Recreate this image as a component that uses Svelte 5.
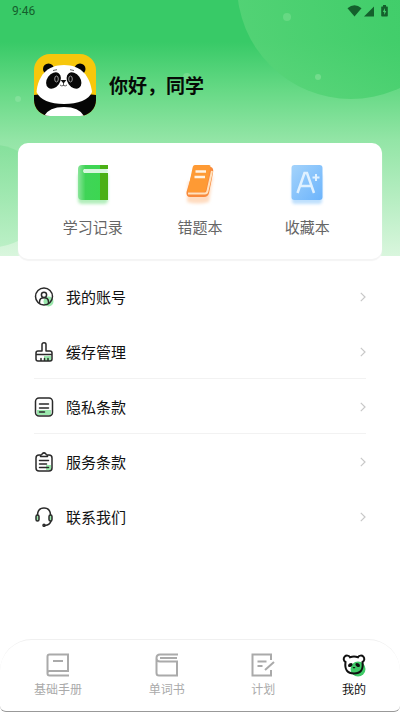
<script>
const stats = [
  {id: 'record', label: '学习记录'},
  {id: 'mistakes', label: '错题本'},
  {id: 'favorites', label: '收藏本'},
];

const rows = [
  {id: 'account', label: '我的账号', line: false},
  {id: 'cache', label: '缓存管理', line: true},
  {id: 'privacy', label: '隐私条款', line: true},
  {id: 'terms', label: '服务条款', line: false},
  {id: 'contact', label: '联系我们', line: false},
];

const tabs = [
  {id: 'manual', label: '基础手册'},
  {id: 'words', label: '单词书'},
  {id: 'plan', label: '计划'},
  {id: 'me', label: '我的'},
];

let activeTab = $state('me');
</script>

<div class="page">
  <header class="hero">
    <svg class="hero__decor" viewBox="0 0 400 256" preserveAspectRatio="xMidYMin slice" aria-hidden="true">
      <defs>
        <linearGradient id="bubble" x1="0" y1="0.5" x2="1" y2="0.3">
          <stop offset="0" stop-color="#58d478"/>
          <stop offset="0.6" stop-color="#45cf6c"/>
          <stop offset="1" stop-color="#3ecc69"/>
        </linearGradient>
        <linearGradient id="bubble-left" x1="0" y1="0" x2="0" y2="1">
          <stop offset="0" stop-color="#82df99"/>
          <stop offset="1" stop-color="#b5eec1"/>
        </linearGradient>
      </defs>
      <circle cx="351" cy="-15" r="114" fill="url(#bubble)" opacity="0.8"/>
      <circle cx="-6" cy="196" r="51" fill="url(#bubble-left)" opacity="0.8"/>
      <circle cx="287" cy="17" r="4" fill="#66d983"/>
      <circle cx="318" cy="77" r="3" fill="#72dc8c"/>
      <circle cx="18" cy="99" r="3" fill="#82e19a"/>
      <circle cx="187" cy="77" r="4" fill="#72dc8c"/>
    </svg>

    <div class="status">
      <span>9:46</span>
      <svg width="42" height="14" viewBox="0 0 42 14" fill="#14602c" aria-hidden="true">
        <path d="M1.5 4.2 Q8.5 -1.6 15.5 4.2 L8.5 12.5Z"/>
        <path d="M18 12.5 L28 2.5 V12.5Z"/>
        <path d="M37 1h3v1.500h1.200q.6 0 .6.6v8.600q0 .8-.8.8h-5q-.8 0-.8-.8v-8.600q0-.6.6-.6H37Z"/>
        <path d="M39 4 L36.800 8h1.400v3L40.300 7H39Z" fill="#43cd6b"/>
      </svg>
    </div>

    <div class="profile">
      <svg class="profile__avatar" width="62" height="62" viewBox="0 0 62 62" role="img" aria-label="头像">
        <rect width="62" height="62" fill="#f7c70c"/>
        <path d="M0 41 Q31 36 62 41 V62 H0Z" fill="#050505"/>
        <circle cx="14.500" cy="15" r="5.500" fill="#050505"/>
        <circle cx="46" cy="15" r="5.500" fill="#050505"/>
        <path d="M2.500 38 C4 22 13 11 30 11 C47 11 56 22 58 38 C55 46 44 50 30 50 C16 50 6 46 2.500 38Z" fill="#fff"/>
        <ellipse cx="19.500" cy="26.500" rx="6.500" ry="9" transform="rotate(35 19.500 26.500)" fill="#080808"/>
        <ellipse cx="40" cy="26.500" rx="6.500" ry="9" transform="rotate(-35 40 26.500)" fill="#080808"/>
        <ellipse cx="22.500" cy="25" rx="1.800" ry="3" fill="none" stroke="#999"/>
        <ellipse cx="36.500" cy="25" rx="1.800" ry="3" fill="none" stroke="#999"/>
        <path d="M26.500 26h6l-3 3.500Z" fill="#111"/>
        <path d="M29.500 29v2.500m-3.500-.5q1.500 1.500 3.500.5q2 1 3.500-.5M19 16.500l4-.8M36 15.700l4 .8" stroke="#333" stroke-width=".8" fill="none"/>
        <path d="M10 62 Q15 53 30 53 Q45 53 50 62Z" fill="#fff"/>
      </svg>
      <h1 class="profile__name">你好，同学</h1>
    </div>
  </header>

  <section class="card">
    {#each stats as stat (stat.id)}
      <button class="stat" type="button">
        <svg width="40" height="48" viewBox="0 0 40 48" aria-hidden="true">
          {#if stat.id === 'record'}
            <defs>
              <linearGradient id="book" x1="0" y1="0" x2="1" y2="0">
                <stop offset="0" stop-color="#8be59b"/>
                <stop offset=".25" stop-color="#40d457"/>
                <stop offset="1" stop-color="#3ad84f"/>
              </linearGradient>
              <filter id="soft" x="-30%" y="-30%" width="160%" height="160%"><feGaussianBlur stdDeviation="1.500"/></filter>
            </defs>
            <rect x="5" y="13" width="30" height="31" rx="4" fill="#b4eebc" filter="url(#soft)"/>
            <path d="M9 5H35V9H11v4H35V40H9q-4 0-4-4V9q0-4 4-4Z" fill="url(#book)"/>
            <path d="M27 5h8v4h-8Zm0 8h8v27h-8Z" fill="#4bb015"/>
            <rect x="10" y="9" width="25" height="4" rx="2" fill="#d7f7dd"/>
          {:else if stat.id === 'mistakes'}
            <path d="M8 22 L33 16 L29 42 Q17 45 7 42Z" fill="#ffdcc0" filter="url(#soft)"/>
            <path d="M14 7H31Q34 8 33 13L29 33Q28 37 24 37H10Q6 37 6.500 32Z" fill="#f98a3c"/>
            <path d="M8 33.500H25Q27 33.500 27.500 31L32 11" stroke="#ffe2bd" stroke-width="2" fill="none"/>
            <path d="M15 5H29Q31 5 30.500 7L26 30Q25.500 32 23.500 32H7.500L12.500 8Q13 5 15 5Z" fill="#fe9a34"/>
            <path d="M15.500 11.500H26M14.500 17H25" stroke="#fff2e2" stroke-width="2.500"/>
          {:else}
            <defs>
              <linearGradient id="sheet" x1="0" y1="0" x2="1" y2="1">
                <stop offset="0" stop-color="#a4d3fb"/>
                <stop offset="1" stop-color="#6cb4fc"/>
              </linearGradient>
            </defs>
            <rect x="5" y="14" width="30" height="30" rx="3" fill="#bfe0fd" filter="url(#soft)"/>
            <rect x="4.500" y="5" width="31" height="35" rx="3" fill="url(#sheet)"/>
            <path d="M10.500 33 L17.500 13 H20 L27 33M13 26H25" stroke="#e0f1ff" stroke-width="2.500" fill="none"/>
            <path d="M29 14v7M25.500 17.500h7" stroke="#e0f1ff" stroke-width="2"/>
          {/if}
        </svg>
        <span>{stat.label}</span>
      </button>
    {/each}
  </section>

  <ul class="menu">
    {#each rows as row (row.id)}
      <li class="menu__row {row.line ? 'menu__row--line' : ''}">
        <button class="menu__button" type="button">
          <svg width="20" height="20" viewBox="0 0 20 20" fill="none" stroke="#2a2a2a" stroke-width="1.500" stroke-linecap="round" stroke-linejoin="round" aria-hidden="true">
            {#if row.id === 'account'}
              <circle cx="14.500" cy="14.500" r="5" fill="#9be8ad" stroke="none"/>
              <circle cx="10" cy="9.500" r="8.500"/>
              <circle cx="10" cy="7.800" r="2.600"/>
              <path d="M5.500 16.500V15Q5.500 10.800 10 10.800T14.500 15v1.500"/>
            {:else if row.id === 'cache'}
              <path d="M10 14h7v5h-7Z" fill="#9be8ad" stroke="none"/>
              <path d="M8 9V2.500Q8 .8 10 .8T12 2.500V9h4q2 0 2 2v6q0 2-2 2H4q-2 0-2-2v-6Q2 9 4 9ZM2 12.500h16M7 19v-2.500M10.500 19v-2.500M14 19v-2.500"/>
            {:else if row.id === 'privacy'}
              <path d="M3 13h14v5H3Z" fill="#9be8ad" stroke="none"/>
              <rect x="1.500" y="1" width="17" height="18" rx="3.500"/>
              <path d="M5.500 7h9M5.500 11h9M5.500 15h5"/>
            {:else if row.id === 'terms'}
              <path d="M12 13h5v5h-5Z" fill="#9be8ad" stroke="none"/>
              <path d="M6.500 3H5Q2 3 2 6v10q0 3 3 3h10q3 0 3-3V6q0-3-3-3h-1.500M6.500 4.500V3Q8 3 8.200 1.800 10 0 11.800 1.800 12 3 13.500 3v1.500ZM5.500 8.500h9M5.500 12h7M5.500 15.500h9"/>
            {:else}
              <path d="M3.500 8V7.500Q4 1 10 1t6.500 6.500V8M17 14q-1 4-6 4.500"/>
              <rect x="2" y="8" width="3" height="6" rx="1.500" fill="#9be8ad"/>
              <rect x="15" y="8" width="3" height="6" rx="1.500" fill="#9be8ad"/>
              <circle cx="10" cy="18.300" r="1"/>
            {/if}
          </svg>
          <span class="menu__label">{row.label}</span>
          <svg width="6" height="10" viewBox="0 0 6 10" fill="none" stroke="#c8c8c8" stroke-width="1.200" aria-hidden="true">
            <path d="M.8 .8 L5 5 L.8 9.200"/>
          </svg>
        </button>
      </li>
    {/each}
  </ul>

  <nav class="tabs">
    {#each tabs as tab (tab.id)}
      <button class="tab {activeTab === tab.id ? 'tab--active' : ''}" type="button" onclick={() => activeTab = tab.id}>
        <svg width="24" height="24" viewBox="0 0 24 24" fill="none" stroke="currentColor" stroke-width="2" aria-hidden="true">
          {#if tab.id === 'manual'}
            <path d="M23 22.500H3.500Q1.500 22.500 1.500 20.500V3.500Q1.500 1.500 3.500 1.500H22V18H3.500Q1.500 18 1.500 20M7 8h10"/>
          {:else if tab.id === 'words'}
            <path d="M23 1.500H5Q1.500 1.500 1.500 5V20q0 2.500 2.500 2.500H22V8.500H5Q1.500 8.500 1.500 5M5 5H22"/>
          {:else if tab.id === 'plan'}
            <path d="M20 7V1.500H1.500V22.500H20V17M6.500 8.500h9M6.500 13h5M23 9l-9 8"/>
          {:else}
            <circle cx="16" cy="16" r="7.500" fill="#3fca67" stroke="none"/>
            <path d="M8 4.200 Q12 3 16 4.200 A3.400 3.400 0 1 1 20.500 9 Q22 20.500 12 20.500 Q2 20.500 3.500 9 A3.400 3.400 0 1 1 8 4.200Z"/>
            <ellipse cx="8.300" cy="12" rx="2.500" ry="1.700" transform="rotate(-35 8.300 12)" fill="currentColor" stroke="none"/>
            <ellipse cx="15.700" cy="12" rx="2.500" ry="1.700" transform="rotate(35 15.700 12)" fill="currentColor" stroke="none"/>
            <path d="M10.500 14h3L12 15.800Z" fill="currentColor" stroke="none"/>
          {/if}
        </svg>
        <span>{tab.label}</span>
      </button>
    {/each}
  </nav>
</div>

<style>
:global(body) {
  margin: 0;
  background: #fff;
}

.page {
  display: flex;
  flex-direction: column;
  min-height: 100vh;
  font-family: "Noto Sans CJK SC", sans-serif;
  color: #111;
}

button {
  border: 0;
  padding: 0;
  background: none;
  font-family: inherit;
  color: inherit;
  cursor: pointer;
}

.hero {
  position: relative;
  overflow: hidden;
  padding-bottom: 140px;
  background: linear-gradient(#38ca67 0, #38ca67 42px, #66d985 90px, #93e5a6 140px, #d9f6dd 256px);
}

.hero__decor {
  position: absolute;
  top: 0;
  left: 0;
  width: 100%;
  height: 100%;
}

.status {
  position: relative;
  display: flex;
  align-items: center;
  justify-content: space-between;
  height: 22px;
  padding: 0 12px;
  font-family: Roboto, sans-serif;
  font-size: 12px;
  color: #14602c;
}

.profile {
  position: relative;
  display: flex;
  align-items: center;
  gap: 13px;
  padding: 32px 34px 0;
}

.profile__avatar {
  border-radius: 16px;
}

.profile__name {
  margin: 0;
  font-size: 19px;
  line-height: 28px;
  font-weight: 700;
  color: #060a07;
}

.card {
  position: relative;
  display: grid;
  grid-template-columns: repeat(3, 1fr);
  margin: -113px 18px 0;
  padding: 17px 21px 20px;
  border-radius: 10px;
  background: #fff;
  box-shadow: 0 2px 1px #f4f4f4;
}

.stat {
  display: flex;
  flex-direction: column;
  align-items: center;
  gap: 7px;
  font-size: 15px;
  line-height: 24px;
  color: #666;
}

.menu {
  margin: 10px 0 0;
  padding: 0 34px;
  list-style: none;
}

.menu__row {
  box-sizing: border-box;
  height: 55px;
  padding-top: 2px;
  border-bottom: 1px solid transparent;
}

.menu__row--line {
  border-bottom-color: #f2f2f2;
}

.menu__button {
  display: flex;
  align-items: center;
  gap: 12px;
  width: 100%;
  height: 100%;
  font-size: 15px;
  line-height: 24px;
}

.menu__label {
  flex: 1;
  text-align: left;
}

.tabs {
  display: flex;
  justify-content: space-between;
  margin-top: auto;
  padding: 13px 34px;
  border-top: 1px solid #f0f0f0;
  border-bottom: 1px solid #999;
  border-radius: 32px 32px 6px 6px;
}

.tab {
  display: flex;
  flex-direction: column;
  align-items: center;
  gap: 3px;
  font-size: 12px;
  line-height: 18px;
  color: #aaa;
}

.tab--active {
  color: #111;
}
</style>
